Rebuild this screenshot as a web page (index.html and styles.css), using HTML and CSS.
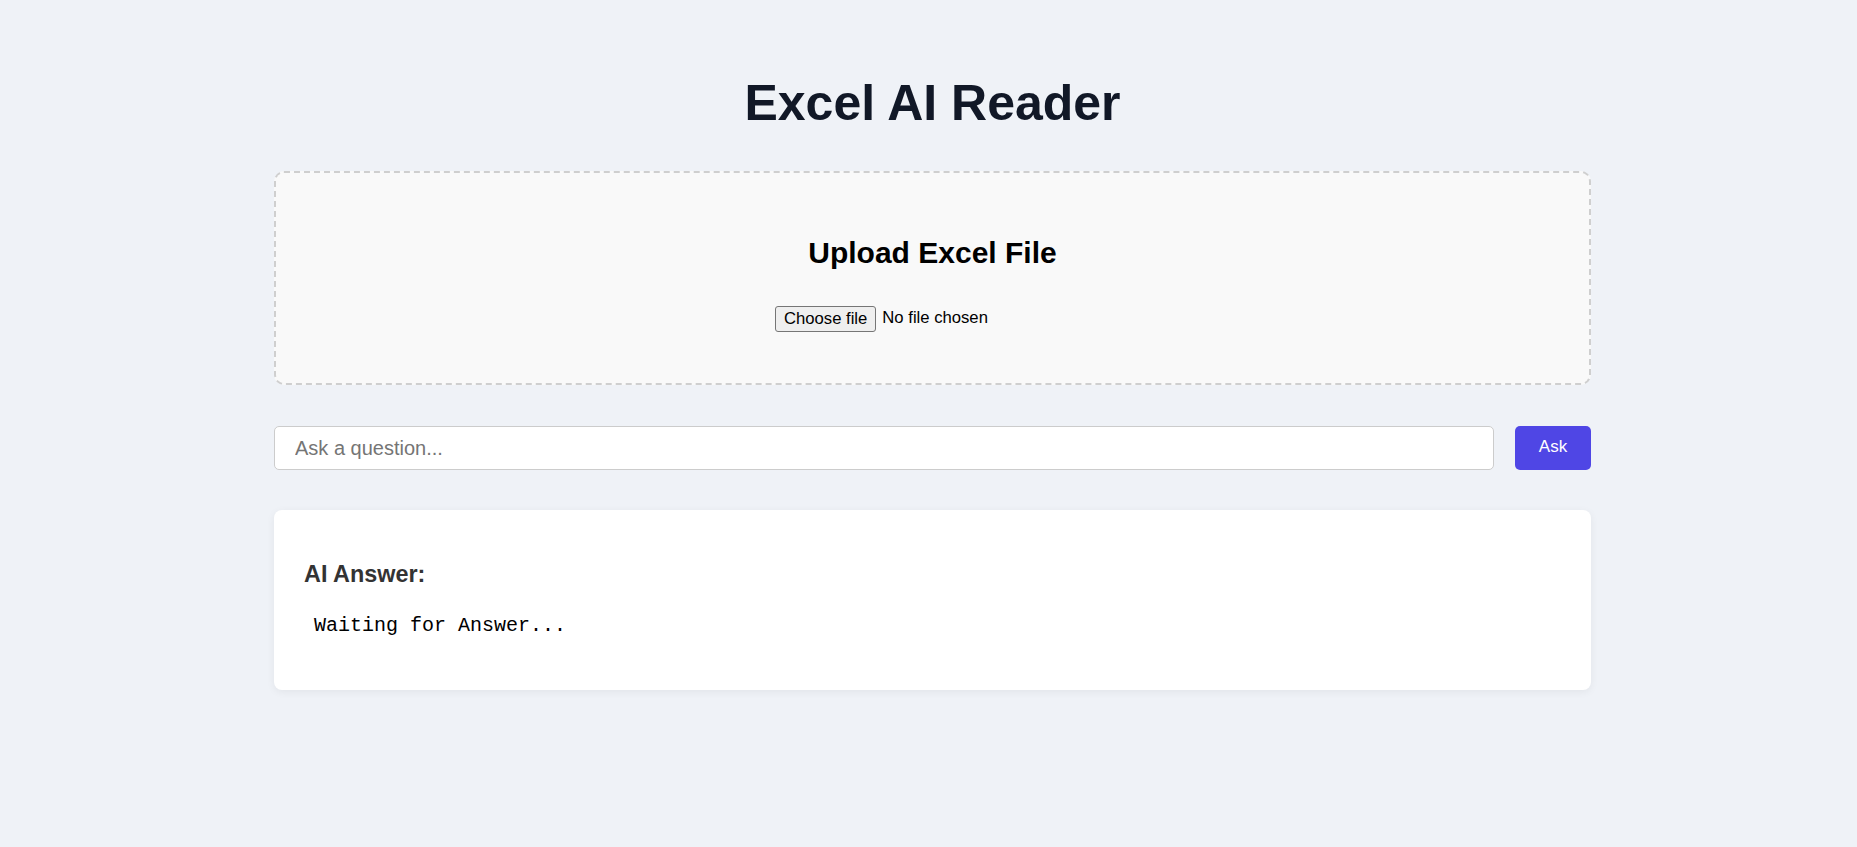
FILE: index.html
```html
<!DOCTYPE html>
<html lang="en">
<head>
<meta charset="utf-8">
<title>Excel AI Reader</title>
<link rel="stylesheet" href="styles.css">
</head>
<body>
<main class="container">
  <h1 class="title">Excel AI Reader</h1>
  <section class="upload">
    <h2 class="upload-title">Upload Excel File</h2>
    <div class="file-input">
      <span class="file-btn">Choose file</span>
      <span class="file-name">No file chosen</span>
    </div>
  </section>
  <div class="ask-row">
    <input class="question" type="text" placeholder="Ask a question...">
    <button class="ask-btn" type="button">Ask</button>
  </div>
  <section class="answer">
    <h3 class="answer-title">AI Answer:</h3>
    <pre class="answer-text">Waiting for Answer...</pre>
  </section>
</main>
</body>
</html>
```

FILE: styles.css
```css
html, body {
  margin: 0;
  background: #eff2f7;
}
body {
  padding: 0 0 0 8px;
  font-family: "Liberation Sans", Arial, sans-serif;
}
.container {
  width: 1317px;
  margin: 0 auto;
  padding-top: 74px;
  padding-bottom: 100px;
}
.title {
  margin: 0 0 39px;
  font-size: 50px;
  line-height: 58px;
  font-weight: 700;
  color: #111827;
  text-align: center;
}
.upload {
  border: 2px dashed #cfcfcf;
  border-radius: 10px;
  background: #f9f9f9;
  padding: 62px 0 51px;
  text-align: center;
}
.upload-title {
  margin: 0 0 36px;
  font-size: 30px;
  line-height: 35px;
  font-weight: 700;
  color: #000;
}
.file-input {
  display: inline-flex;
  align-items: center;
  width: 315px;
  height: 26px;
  text-align: left;
  font-size: 16.67px;
  color: #000;
}
.file-btn {
  box-sizing: border-box;
  height: 26px;
  display: inline-flex;
  align-items: center;
  padding: 0 8px 1px;
  border: 1px solid #767676;
  border-radius: 3px;
  background: #efefef;
  color: #000;
}
.file-name {
  margin-left: 6px;
  padding-bottom: 2px;
}
.ask-row {
  display: flex;
  gap: 21px;
  margin-top: 41px;
}
.question {
  flex: 1;
  box-sizing: border-box;
  height: 44px;
  margin: 0;
  padding: 0 20px;
  border: 1px solid #cccccc;
  border-radius: 5px;
  background: #fff;
  font-family: "Liberation Sans", Arial, sans-serif;
  font-size: 20px;
  color: #000;
  outline: none;
}
.question::placeholder {
  color: #757575;
}
.ask-btn {
  box-sizing: border-box;
  width: 76px;
  height: 44px;
  margin: 0;
  padding: 0 0 2px;
  border: none;
  border-radius: 5px;
  background: #4f46e5;
  color: #fff;
  font-family: "Liberation Sans", Arial, sans-serif;
  font-size: 17px;
}
.answer {
  margin-top: 40px;
  padding: 30px 30px 52px;
  background: #fff;
  border-radius: 8px;
  box-shadow: 0 2px 8px rgba(0, 0, 0, 0.06);
}
.answer-title {
  margin: 21px 0 26px;
  font-size: 23.4px;
  line-height: 27px;
  font-weight: 700;
  color: #333;
}
.answer-text {
  margin: 0;
  padding: 0 10px;
  font-family: "Liberation Mono", "Courier New", monospace;
  font-size: 20px;
  line-height: 24px;
  color: #000;
}
```
